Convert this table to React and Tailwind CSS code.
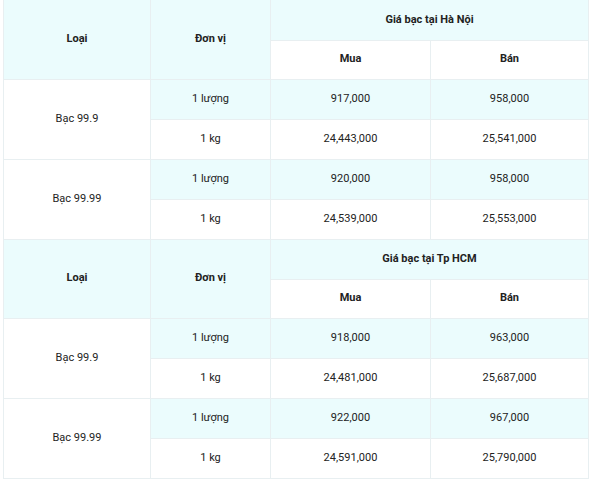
import React from "react";

const sections = [
  {
    city: "Giá bạc tại Hà Nội",
    rows: [
      { type: "Bạc 99.9", data: [["1 lượng", "917,000", "958,000"], ["1 kg", "24,443,000", "25,541,000"]] },
      { type: "Bạc 99.99", data: [["1 lượng", "920,000", "958,000"], ["1 kg", "24,539,000", "25,553,000"]] },
    ],
  },
  {
    city: "Giá bạc tại Tp HCM",
    rows: [
      { type: "Bạc 99.9", data: [["1 lượng", "918,000", "963,000"], ["1 kg", "24,481,000", "25,687,000"]] },
      { type: "Bạc 99.99", data: [["1 lượng", "922,000", "967,000"], ["1 kg", "24,591,000", "25,790,000"]] },
    ],
  },
];

const cell = "border border-[#e8eff1] text-center align-middle p-0";

export default function App() {
  return (
    <div className="w-[591px] h-[480px] overflow-hidden bg-white pl-[3px] pr-[3px]" style={{ fontFamily: "Roboto, 'Liberation Sans', sans-serif" }}>
      <table className="w-[585px] border-collapse table-fixed text-[11px] text-[#222]">
        <colgroup>
          <col className="w-[147px]" />
          <col className="w-[120px]" />
          <col className="w-[160px]" />
          <col className="w-[158px]" />
        </colgroup>
        <tbody>
          {sections.map((s, si) => (
            <React.Fragment key={si}>
              <tr className="h-[40px]">
                <td rowSpan={2} className={`${cell} bg-[#ebfcfd] font-bold ${si === 0 ? "border-t-0" : ""}`}>Loại</td>
                <td rowSpan={2} className={`${cell} bg-[#ebfcfd] font-bold ${si === 0 ? "border-t-0" : ""}`}>Đơn vị</td>
                <td colSpan={2} className={`${cell} bg-[#ebfcfd] font-bold ${si === 0 ? "border-t-0" : ""}`}>{s.city}</td>
              </tr>
              <tr className="h-[39px]">
                <td className={`${cell} bg-white font-bold`}>Mua</td>
                <td className={`${cell} bg-white font-bold`}>Bán</td>
              </tr>
              {s.rows.map((r, ri) => (
                <React.Fragment key={ri}>
                  <tr className="h-[40px]">
                    <td rowSpan={2} className={`${cell} bg-white`}>{r.type}</td>
                    {r.data[0].map((v, i) => (
                      <td key={i} className={`${cell} bg-[#ebfcfd]`}>{v}</td>
                    ))}
                  </tr>
                  <tr className="h-[40px]">
                    {r.data[1].map((v, i) => (
                      <td key={i} className={`${cell} bg-white`}>{v}</td>
                    ))}
                  </tr>
                </React.Fragment>
              ))}
            </React.Fragment>
          ))}
        </tbody>
      </table>
    </div>
  );
}
